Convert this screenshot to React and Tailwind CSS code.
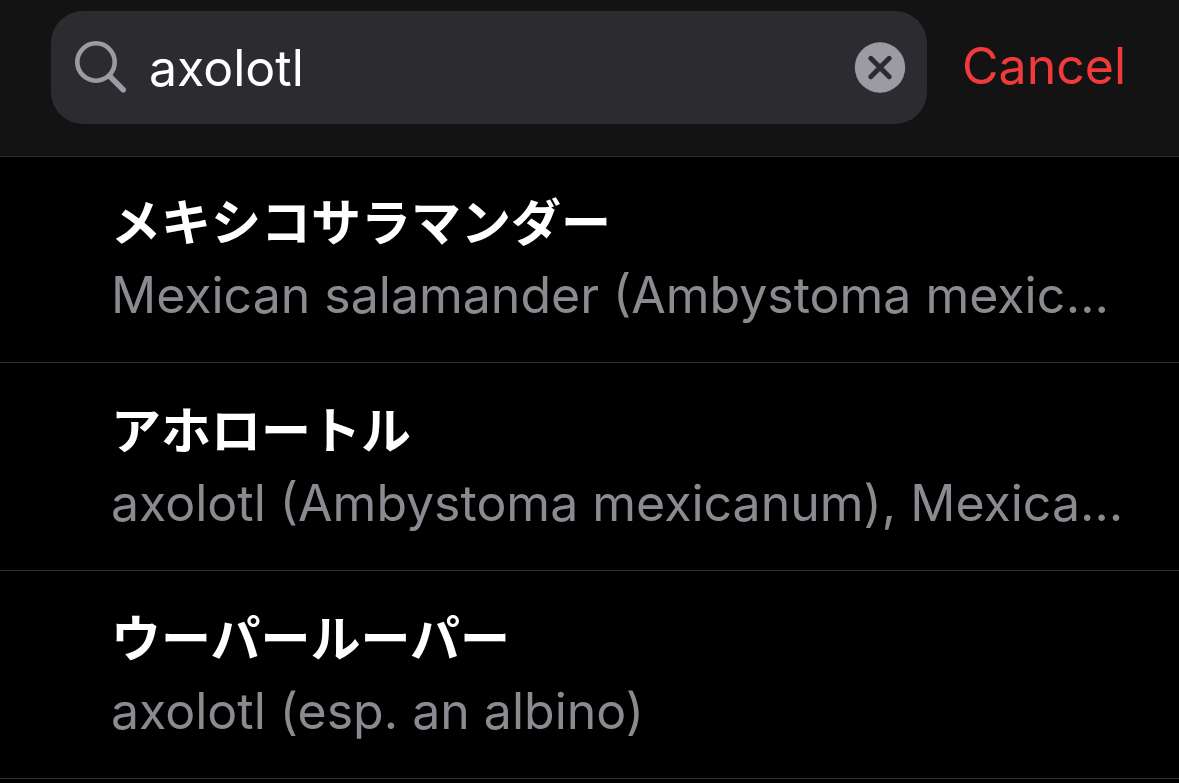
import { useState } from "react";

const results = [
  {
    word: "メキシコサラマンダー",
    meaning: "Mexican salamander (Ambystoma mexicanum), axolotl",
  },
  {
    word: "アホロートル",
    meaning: "axolotl (Ambystoma mexicanum), Mexican salamander",
  },
  {
    word: "ウーパールーパー",
    meaning: "axolotl (esp. an albino)",
  },
];

const SearchIcon = () => (
  <svg viewBox="0 0 54 54" className="h-[54px] w-[54px] shrink-0" fill="none" aria-hidden="true">
    <circle cx="21" cy="21" r="18.7" stroke="#9c9ba3" strokeWidth="4.6" />
    <path d="M34.5 35 48.2 48.7" stroke="#9c9ba3" strokeWidth="5.6" strokeLinecap="round" />
  </svg>
);

const ClearIcon = () => (
  <svg viewBox="0 0 52 52" className="h-[52px] w-[52px]" aria-hidden="true">
    <circle cx="26" cy="25.5" r="25.2" fill="#9c9ba3" />
    <path d="M16.8 16.3 35.2 34.7M35.2 16.3 16.8 34.7" stroke="#2c2b30" strokeWidth="5" strokeLinecap="round" />
  </svg>
);

const SearchBar = () => {
  const [query, setQuery] = useState("axolotl");

  return (
    <header className="flex items-center border-b border-[#2c2c2e] bg-[#131313] pt-[11px] pr-[53px] pb-8 pl-[51px]">
      <div className="flex h-[113px] min-w-0 flex-1 items-center rounded-[32px] bg-[#2c2b30] pr-[21px] pl-6">
        <SearchIcon />
        <input
          type="text"
          aria-label="Search"
          value={query}
          onChange={(e) => setQuery(e.target.value)}
          className="ml-5 h-full min-w-0 flex-1 bg-transparent text-[50px] text-white outline-none"
        />
        <button type="button" aria-label="Clear search" onClick={() => setQuery("")}>
          <ClearIcon />
        </button>
      </div>
      <button type="button" className="ml-[35px] pb-0.5 text-[50px] text-[#f23a3c]">
        Cancel
      </button>
    </header>
  );
};

const App = () => (
  <main className="min-h-screen bg-black font-['Inter','Noto_Sans_CJK_JP',sans-serif]">
    <SearchBar />
    <ul>
      {results.map(({ word, meaning }) => (
        <li key={word} className="border-b border-[#303032] pt-[30px] pr-12 pb-[33px] pl-[111px] first:pt-7">
          <h2 className="text-[50px] leading-[76px] font-bold text-white">{word}</h2>
          <p className="truncate text-[50px] leading-[68px] text-[#8b8a90]">{meaning}</p>
        </li>
      ))}
    </ul>
  </main>
);

export default App;
